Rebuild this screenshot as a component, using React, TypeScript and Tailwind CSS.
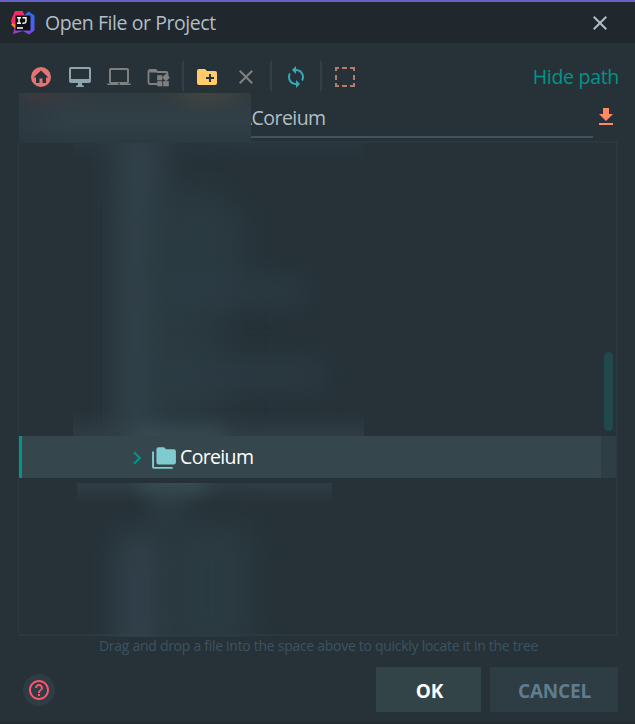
import React from "react";

type IconProps = { d: string; className: string; size: number };

function Icon({ d, className, size }: IconProps) {
  return (
    <svg width={size} height={size} viewBox="0 0 24 24" fill="currentColor" className={`block shrink-0 ${className}`}>
      <path d={d} />
    </svg>
  );
}

function Logo() {
  return (
    <svg width="24" height="24" viewBox="0 0 24 24" className="block shrink-0">
      <defs>
        <linearGradient id="ijBlue" x1="0.6" y1="0" x2="0.4" y2="1">
          <stop offset="0" stopColor="#2f6df2" />
          <stop offset="0.6" stopColor="#4b5fe8" />
          <stop offset="1" stopColor="#9a3bd8" />
        </linearGradient>
        <linearGradient id="ijPink" x1="0" y1="0" x2="1" y2="1">
          <stop offset="0" stopColor="#fe2857" />
          <stop offset="1" stopColor="#e0337f" />
        </linearGradient>
      </defs>
      <path d="M0 13.500 3 10.500 7 11V18L3.500 17Z" fill="#fc801d" />
      <path d="M0.500 8 4 0 11.500 0 14 5 6 14 0 11.500Z" fill="url(#ijPink)" />
      <path d="M2 23 3.500 17 8 16 12 20Z" fill="#b534b5" />
      <path d="M12.500 5 17.500 .5 23.500 4.500 23.500 19.500 18 23.500 11 19.500 2 23 7 17Z" fill="url(#ijBlue)" />
      <rect x="4.500" y="4.500" width="15" height="15" fill="#101012" />
      <path d="M6 6.700h4M8 7v5M6 12.300h4M11.500 6.700H15v3.500q0 2.300-3.500 2M6 17h6" fill="none" stroke="#fff" strokeWidth="1.400" />
    </svg>
  );
}

function Separator() {
  return <div className="h-[30px] w-[2px] shrink-0 bg-[#304049]" />;
}

function Toolbar() {
  return (
    <div className="flex h-[30px] items-center pl-[29px]">
      <Icon size={24} className="mt-[2px] text-[#e57373]" d="M12 2a10 10 0 1 0 0 20 10 10 0 0 0 0-20ZM4.500 12.500 12 5.500l7.500 7H17V18h-3.500v-4.500h-3V18H7v-5.500Z" />
      <div className="ml-[15px] mt-[2px]">
        <Icon size={24} className="text-[#90a4ae]" d="M21 2H3a2 2 0 0 0-2 2v12a2 2 0 0 0 2 2h7v2l-2 1v1h8v-1l-2-1v-2h7a2 2 0 0 0 2-2V4a2 2 0 0 0-2-2Zm0 12H3V4h18Z" />
      </div>
      <div className="ml-[15px] mt-[2px]">
        <Icon size={24} className="text-[#808080]" d="M20.300 18.500c1.100 0 1.700-.9 1.700-2V5a2 2 0 0 0-2-2H4a2 2 0 0 0-2 2v11.500c0 1.100.6 2 1.700 2H0c.1 1.100.900 1.500 2 1.500h20c1.100 0 2-.4 2-1.500ZM4 5h16v12H4Zm8 14.600a.9.9 0 1 1 0-1.800.9.900 0 0 1 0 1.800Z" />
      </div>
      <svg width="24" height="24" viewBox="0 0 24 24" className="ml-[16px] mt-[2px] block shrink-0 text-[#808080]" fill="none" stroke="currentColor">
        <path d="M10 19H3a1.500 1.500 0 0 1-1.500-1.500V6.500A1.500 1.500 0 0 1 3 5h5.500l2 2H19a1.500 1.500 0 0 1 1.500 1.500V11" strokeWidth="1.800" />
        <path d="M2.500 4H9l2.500 3.500h-9Z" fill="currentColor" stroke="none" />
        <path d="M10.500 10.500h4.500v4.500h-4.500zM10.500 16.500h4.500v4.500h-4.500zM16.500 16.500h5v4.500h-5zM19 8.800l3.500 3.800-3.500 3.500-3.500-3.500Z" fill="currentColor" strokeWidth=".7" />
      </svg>
      <div className="ml-[11px]"><Separator /></div>
      <div className="ml-[11px] mt-[2px]">
        <Icon size={24} className="text-[#ffcb6b]" d="M20 6h-8l-2-2H4a2 2 0 0 0-2 2v12a2 2 0 0 0 2 2h16a2 2 0 0 0 2-2V8a2 2 0 0 0-2-2Zm-1 8h-3v3h-2v-3h-3v-2h3V9h2v3h3Z" />
      </div>
      <div className="ml-[15px] mt-[2px]">
        <Icon size={24} className="text-[#808080]" d="M19 6.410 17.590 5 12 10.590 6.410 5 5 6.410 10.590 12 5 17.590 6.410 19 12 13.410 17.590 19 19 17.590 13.410 12Z" />
      </div>
      <div className="ml-[12px]"><Separator /></div>
      <div className="ml-[12px] mt-[2px]">
        <Icon size={24} className="text-[#35aab8]" d="M12 4V1L8 5l4 4V6c3.310 0 6 2.690 6 6 0 1.010-.25 1.970-.7 2.800l1.460 1.460A7.930 7.930 0 0 0 20 12c0-4.420-3.580-8-8-8Zm0 14c-3.310 0-6-2.690-6-6 0-1.010.25-1.970.7-2.800L5.240 7.740A7.930 7.930 0 0 0 4 12c0 4.420 3.580 8 8 8v3l4-4-4-4Z" />
      </div>
      <div className="ml-[12px]"><Separator /></div>
      <svg width="24" height="24" viewBox="0 0 24 24" className="ml-[11px] mt-[2px] block shrink-0" fill="none" stroke="#b47c6b" strokeWidth="2">
        <path d="M3 6V3h3M9 3h5M17 3h4v3M21 10v5M21 18v3h-4M14 21H9M6 21H3v-3M3 15v-5" />
      </svg>
      <span className="ml-auto mr-[16px] mt-[2px] whitespace-nowrap text-[19.500px] leading-[28px] tracking-[-0.300px] text-[#009688]">Hide path</span>
    </div>
  );
}

function BlurredRows() {
  return (
    <>
      <div className="absolute left-[54px] top-0 h-[294px] w-[291px] overflow-hidden">
        <div className="absolute left-[46px] top-[-30px] h-[350px] w-[40px] bg-[#374853] opacity-85 blur-[16px]" />
        <div className="absolute left-[72px] top-[45px] h-[250px] w-[76px] bg-[#2c3d43] opacity-75 blur-[20px]" />
        <div className="absolute left-[115px] top-[62px] h-[85px] w-[58px] bg-[#2c3d45] opacity-60 blur-[17px]" />
        <div className="absolute left-[90px] top-[136px] h-[24px] w-[142px] bg-[#2e3e48] opacity-80 blur-[15px]" />
        <div className="absolute left-[90px] top-[218px] h-[28px] w-[162px] bg-[#2e3d47] opacity-80 blur-[15px]" />
        <div className="absolute inset-x-0 top-0 h-[20px] bg-gradient-to-b from-[#2d3b4366] to-transparent" />
        <div className="absolute inset-x-0 bottom-0 h-[26px] bg-gradient-to-t from-[#344149aa] to-transparent" />
        <div className="absolute bottom-[-14px] left-[60px] h-[20px] w-[90px] bg-[#3b545b] opacity-80 blur-[10px]" />
      </div>
      <div className="absolute left-[58px] top-[340px] h-[154px] w-[255px] overflow-hidden">
        <div className="absolute inset-x-0 top-0 h-[20px] bg-gradient-to-b from-[#344149aa] to-transparent" />
        <div className="absolute left-[64px] top-[-14px] h-[24px] w-[64px] bg-[#3b555b] opacity-90 blur-[11px]" />
        <div className="absolute left-[75px] top-[10px] h-[30px] w-[30px] bg-[#34464d] opacity-60 blur-[12px]" />
        <div className="absolute left-[42px] top-[50px] h-[130px] w-[42px] bg-[#364753] opacity-80 blur-[16px]" />
        <div className="absolute left-[86px] top-[40px] h-[130px] w-[88px] bg-[#2c3d44] opacity-80 blur-[17px]" />
      </div>
    </>
  );
}

export default function App() {
  return (
    <div className="flex h-[724px] w-[635px] flex-col overflow-hidden border-b-2 border-b-[#222c31] bg-[#263238] font-['Open_Sans','Noto_Sans',sans-serif]">
      <header className="flex h-[43px] shrink-0 items-center border-t-2 border-[#6661c5] bg-[#20272d] pl-[11px] pr-[23px]">
        <Logo />
        <h1 className="ml-[10px] whitespace-nowrap text-[19.500px] tracking-[-0.430px] text-[#b0bec5]">Open File or Project</h1>
        <div className="ml-auto">
          <Icon size={24} className="text-[#b0bec5]" d="M19 6.410 17.590 5 12 10.590 6.410 5 5 6.410 10.590 12 5 17.590 6.410 19 12 13.410 17.590 19 19 17.590 13.410 12Z" />
        </div>
      </header>

      <div className="mt-[18px] shrink-0"><Toolbar /></div>

      <div className="relative mt-[2px] flex h-[48px] shrink-0 pl-[19px]">
        <div className="z-10 h-[50px] w-[232px] shrink-0 bg-[radial-gradient(ellipse_44px_20px_at_22px_0px,#3c3a41,transparent),radial-gradient(ellipse_45px_22px_at_188px_0px,#42453f,transparent),linear-gradient(90deg,#26323866,transparent_22%),linear-gradient(180deg,#303b40_0%,#313f48_60%,#2b3940_100%)]" />
        <div className="-ml-[6px] flex h-[45px] w-[348px] items-center border-b-2 border-[#40545f] pt-[7px]">
          <span className="whitespace-nowrap text-[19.500px] tracking-[-0.550px] text-[#b0bec5]">\Coreium</span>
        </div>
        <Icon size={24} className="ml-[1px] mt-[12px] text-[#ff8a65]" d="M19 9h-4V3H9v6H5l7 7 7-7ZM5 18v2h14v-2H5Z" />
      </div>

      <main className="relative ml-[18px] h-[495px] w-[600px] shrink-0 border-y-2 border-l border-r-2 border-[#2b383f]">
        <BlurredRows />
        <div className="flex h-full flex-col">
          <div className="h-[293px] shrink-0" />
          <div className="relative flex h-[42px] shrink-0 items-center border-l-[3px] border-[#009688] bg-[#35464c] pl-[102px]">
            <Icon size={26} className="mt-[2px] text-[#009688]" d="M8.590 16.590 13.170 12 8.590 7.410 10 6l6 6-6 6Z" />
            <Icon size={26} className="ml-[1px] mt-[2px] text-[#80cbd0]" d="M2.800 6H1v14a2 2 0 0 0 2 2h17v-1.800H2.800Zm18.200-2h-7l-2-2H7a2 2 0 0 0-2 2v12a2 2 0 0 0 2 2h14a2 2 0 0 0 2-2V6a2 2 0 0 0-2-2Z" />
            <span className="ml-[3px] whitespace-nowrap text-[19.500px] tracking-[-0.650px] text-white">Coreium</span>
            <div className="ml-auto h-full w-[15px] bg-[#2f3e45]" />
          </div>
        </div>
        <div className="absolute right-[3px] top-[209px] h-[79px] w-[9px] rounded-full bg-[#21484a]" />
      </main>

      <p className="ml-[99px] shrink-0 whitespace-nowrap text-[14px] leading-[20px] tracking-[-0.285px] text-[#3d5261]">Drag and drop a file into the space above to quickly locate it in the tree</p>

      <footer className="mt-[11px] flex h-[45px] shrink-0 items-center pl-[23px] pr-[17px]">
        <div className="flex size-[32px] items-center justify-center rounded-full bg-[#2e3c43]">
          <Icon size={24} className="text-[#ff5370]" d="M11 18h2v-2h-2v2Zm1-16C6.480 2 2 6.480 2 12s4.480 10 10 10 10-4.480 10-10S17.520 2 12 2Zm0 18c-4.410 0-8-3.590-8-8s3.590-8 8-8 8 3.590 8 8-3.590 8-8 8Zm0-14c-2.210 0-4 1.790-4 4h2c0-1.100.9-2 2-2s2 .9 2 2c0 2-3 1.750-3 5h2c0-2.250 3-2.500 3-5 0-2.210-1.790-4-4-4Z" />
        </div>
        <button className="ml-auto flex h-full w-[105px] items-center justify-center bg-[#324448] pl-[2px] pt-[3px] text-[19px] font-bold text-white">OK</button>
        <button className="ml-[9px] flex h-full w-[128px] items-center justify-center bg-[#2e3c43] pl-px pt-[3px] text-[19px] font-bold tracking-[-0.200px] text-[#607d8f]">CANCEL</button>
      </footer>
    </div>
  );
}
